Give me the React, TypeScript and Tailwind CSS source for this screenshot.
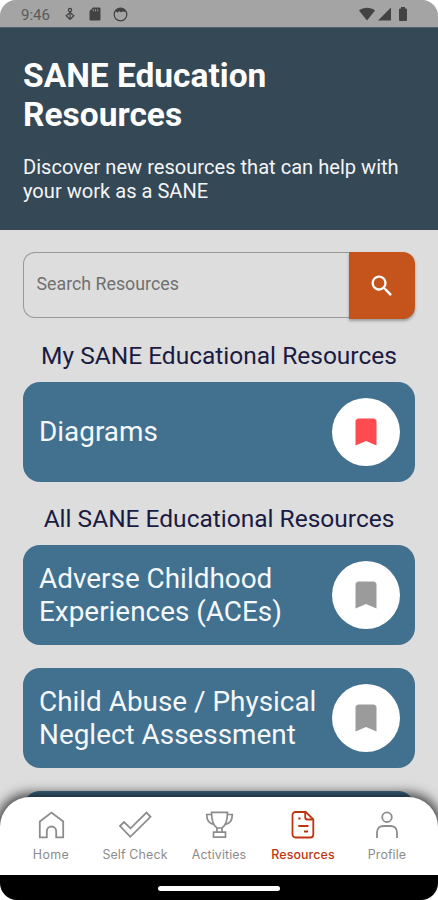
import React from 'react';
import { MdBookmark, MdSearch } from 'react-icons/md';

type Resource = {
  id: number;
  lines: string[];
  saved: boolean;
};

type Tab = {
  name: string;
  icon: React.ReactNode;
  labelClass: string;
};

const myResources: Resource[] = [{ id: 1, lines: ['Diagrams'], saved: true }];

const allResources: Resource[] = [
  { id: 2, lines: ['Adverse Childhood', 'Experiences (ACEs)'], saved: false },
  { id: 3, lines: ['Child Abuse / Physical', 'Neglect Assessment'], saved: false },
];

const HomeIcon = () => (
  <svg width="28" height="30" viewBox="0 0 28 30" fill="none" stroke="currentColor" strokeWidth="1.8">
    <path d="M2.8 27.3V11.5L14.5 2.6l11.7 8.9v15.8h-7v-6.1a4.7 4.7 0 0 0-9.4 0v6.1z" />
  </svg>
);

const CheckIcon = () => (
  <svg width="34" height="30" viewBox="0 0 34 30" fill="none" stroke="currentColor" strokeWidth="1.8">
    <path d="M2 16l4-4 6.500 6.300L28.500 2.600l4 4.200-20.200 20z" />
  </svg>
);

const TrophyIcon = () => (
  <svg width="30" height="30" viewBox="0 0 30 30" fill="none" stroke="currentColor" strokeWidth="1.7">
    <path d="M7.5 2.3h16c0 7.5-1.5 13-5.5 15.7h-5c-4-2.7-5.5-8.2-5.5-15.7z" />
    <path d="M7.5 4.5H2.7c0 5 2 8.8 6.8 9.8M23.5 4.5h4.800c0 5-2 8.800-6.800 9.800" />
    <path d="M13 18v4M18 18v4M9.5 22.2h12v4.9h-12z" />
  </svg>
);

const ResourcesIcon = () => (
  <svg width="26" height="30" viewBox="0 0 26 30" fill="none" stroke="currentColor" strokeWidth="1.8">
    <path d="M5.5 2h10.2l7.6 7.3v15.2a3 3 0 0 1-3 3H5.5a3 3 0 0 1-3-3V5a3 3 0 0 1 3-3z" />
    <path d="M15.2 2.5v4.7a2.300 2.300 0 0 0 2.300 2.300h5.300M8.300 8.500h2.300M8.300 16h10.200M14 21.500h4" />
  </svg>
);

const ProfileIcon = () => (
  <svg width="26" height="30" viewBox="0 0 26 30" fill="none" stroke="currentColor" strokeWidth="1.8">
    <circle cx="13" cy="7.2" r="4.8" />
    <path d="M3 28v-5.500c0-4 2.600-6.500 6.500-6.500h7c3.900 0 6.500 2.500 6.500 6.500V28" />
  </svg>
);

const tabs: Tab[] = [
  { name: 'Home', icon: <HomeIcon />, labelClass: 'tracking-[0.4px]' },
  { name: 'Self Check', icon: <CheckIcon />, labelClass: 'tracking-[0.15px]' },
  { name: 'Activities', icon: <TrophyIcon />, labelClass: 'tracking-[0.1px]' },
  { name: 'Resources', icon: <ResourcesIcon />, labelClass: 'font-medium tracking-[0.1px]' },
  { name: 'Profile', icon: <ProfileIcon />, labelClass: 'tracking-[0.1px]' },
];

const StatusBar = () => (
  <div className="flex h-[27px] shrink-0 items-center bg-[#a4a4a4] pl-[21px] pr-[30px] text-[#424242]">
    <span className="w-[30px] pt-[3px] text-[15px] leading-none text-[#5b5b5b]">9:46</span>
    <svg className="ml-[14px] mt-px" width="10" height="14" viewBox="0 0 10 14" fill="none" stroke="currentColor" strokeWidth="1.2">
      <circle cx="5" cy="3" r="1.6" />
      <path d="M5 4.600v7M1.200 8.800L5 5.600l3.800 3.200L5 12.400z" />
    </svg>
    <svg className="ml-[14px] mt-px" width="12" height="14" viewBox="0 0 12 14" fill="currentColor">
      <path d="M4 .5h6.5a1 1 0 0 1 1 1v11a1 1 0 0 1-1 1h-9a1 1 0 0 1-1-1V4z" />
      <path d="M4.3 2v2.5M6.5 2v2.5M8.7 2v2.5" stroke="#8c8c8c" />
    </svg>
    <svg className="ml-[12px] mt-px" width="15" height="15" viewBox="0 0 15 15" fill="none" stroke="currentColor">
      <circle cx="7.5" cy="7.5" r="6.3" strokeWidth="1.2" />
      <path d="M2.5 3.8C5 .8 10 .8 12.5 3.800l-1 1.500-1.500-1-2 1-2-1-1.500 1.500z" fill="currentColor" stroke="none" />
    </svg>
    <div className="ml-auto flex items-center gap-[3px]">
      <svg width="16" height="14" viewBox="0 0 16 14" fill="currentColor">
        <path d="M8 13.5L0 3.5C4.5-.3 11.5-.3 16 3.5z" />
      </svg>
      <svg width="13" height="14" viewBox="0 0 13 14" fill="currentColor">
        <path d="M13 .5v13H0z" />
      </svg>
      <svg className="ml-[4px]" width="10" height="14" viewBox="0 0 10 14" fill="currentColor">
        <path d="M3 0h4v1.5h1a1 1 0 0 1 1 1V13a1 1 0 0 1-1 1H2a1 1 0 0 1-1-1V2.5a1 1 0 0 1 1-1h1z" />
      </svg>
    </div>
  </div>
);

const ResourceCard = ({ resource }: { resource: Resource }) => (
  <div className="flex h-[100px] shrink-0 items-center justify-between rounded-[17px] bg-[#42708f] pl-4 pr-[15px]">
    <div className="pt-px text-[27.9px] leading-[32.5px] whitespace-nowrap text-[#f4f8fb]">
      {resource.lines.map((line) => (
        <div key={line}>{line}</div>
      ))}
    </div>
    <div className="flex size-[68px] shrink-0 items-center justify-center rounded-full bg-white">
      <MdBookmark size={36} className={resource.saved ? 'text-[#fd4b4f]' : 'text-[#9b9b9b]'} />
    </div>
  </div>
);

const SectionTitle = ({ children }: { children: React.ReactNode }) => (
  <h2 className="text-center text-[24.5px] leading-[30px] whitespace-nowrap text-[#1b1b42]">{children}</h2>
);

const App: React.FC = () => {
  return (
    <div className="h-[900px] w-[438px] overflow-hidden bg-white font-['Roboto',sans-serif]">
      <div className="flex h-[900px] flex-col overflow-hidden rounded-t-[16px] rounded-b-[17px] bg-[#dddddd]">
        <StatusBar />

        <header className="h-[203px] shrink-0 border-t border-[#53626e] bg-[#354856] px-[23px] pt-[28px] text-white">
          <h1 className="text-[33.5px] leading-[39px] font-bold whitespace-nowrap">
            SANE Education
            <br />
            Resources
          </h1>
          <p className="mt-[22px] text-[20.1px] leading-[23.5px] whitespace-nowrap text-[#f3f5f6]">
            Discover new resources that can help with
            <br />
            your work as a SANE
          </p>
        </header>

        <main className="flex h-[567px] shrink-0 flex-col overflow-hidden px-[23px] pt-[22px]">
          <div className="flex h-[67px] shrink-0 items-start">
            <div className="flex h-[66px] flex-1 items-center rounded-l-[12px] border border-r-0 border-[#999999] pb-[2px] pl-[12.5px] text-[17.8px] text-[#707070]">
              Search Resources
            </div>
            <button className="flex h-[67px] w-[66px] items-center justify-center rounded-r-[12px] bg-[#c4541b] text-white shadow-[0_2px_3px_rgba(0,0,0,0.3)]">
              <MdSearch size={28} />
            </button>
          </div>

          <div className="pt-[22px] pb-[11px]">
            <SectionTitle>My SANE Educational Resources</SectionTitle>
          </div>
          {myResources.map((resource) => (
            <ResourceCard key={resource.id} resource={resource} />
          ))}

          <div className="pt-[22px] pb-[11px]">
            <SectionTitle>All SANE Educational Resources</SectionTitle>
          </div>
          <div className="flex flex-col gap-[23px]">
            {allResources.map((resource) => (
              <ResourceCard key={resource.id} resource={resource} />
            ))}
            {/* top edge of the next card, peeking out above the tab bar */}
            <div className="h-[6px] shrink-0 overflow-hidden">
              <div className="h-[100px] rounded-[17px] bg-[#42708f]" />
            </div>
          </div>
        </main>

        {/* Bottom tab bar */}
        <nav className="relative flex h-[78px] shrink-0 rounded-t-[30px] bg-white px-[9px] pt-[13px] shadow-[0_0_12px_4px_rgba(0,0,0,0.7)]">
          {tabs.map((tab) => (
            <div
              key={tab.name}
              className={`flex w-[84px] flex-col items-center ${tab.name === 'Resources' ? 'text-[#bd3510]' : 'text-[#8c8c8c]'}`}
            >
              {tab.icon}
              <span className={`mt-[8px] font-['Inter',sans-serif] text-[12.4px] leading-[14px] whitespace-nowrap ${tab.labelClass}`}>
                {tab.name}
              </span>
            </div>
          ))}
        </nav>

        <div className="relative flex h-[26px] shrink-0 items-center justify-center bg-black">
          <div className="h-[5px] w-[122px] rounded-full bg-white" />
        </div>
      </div>
    </div>
  );
};

export default App;
